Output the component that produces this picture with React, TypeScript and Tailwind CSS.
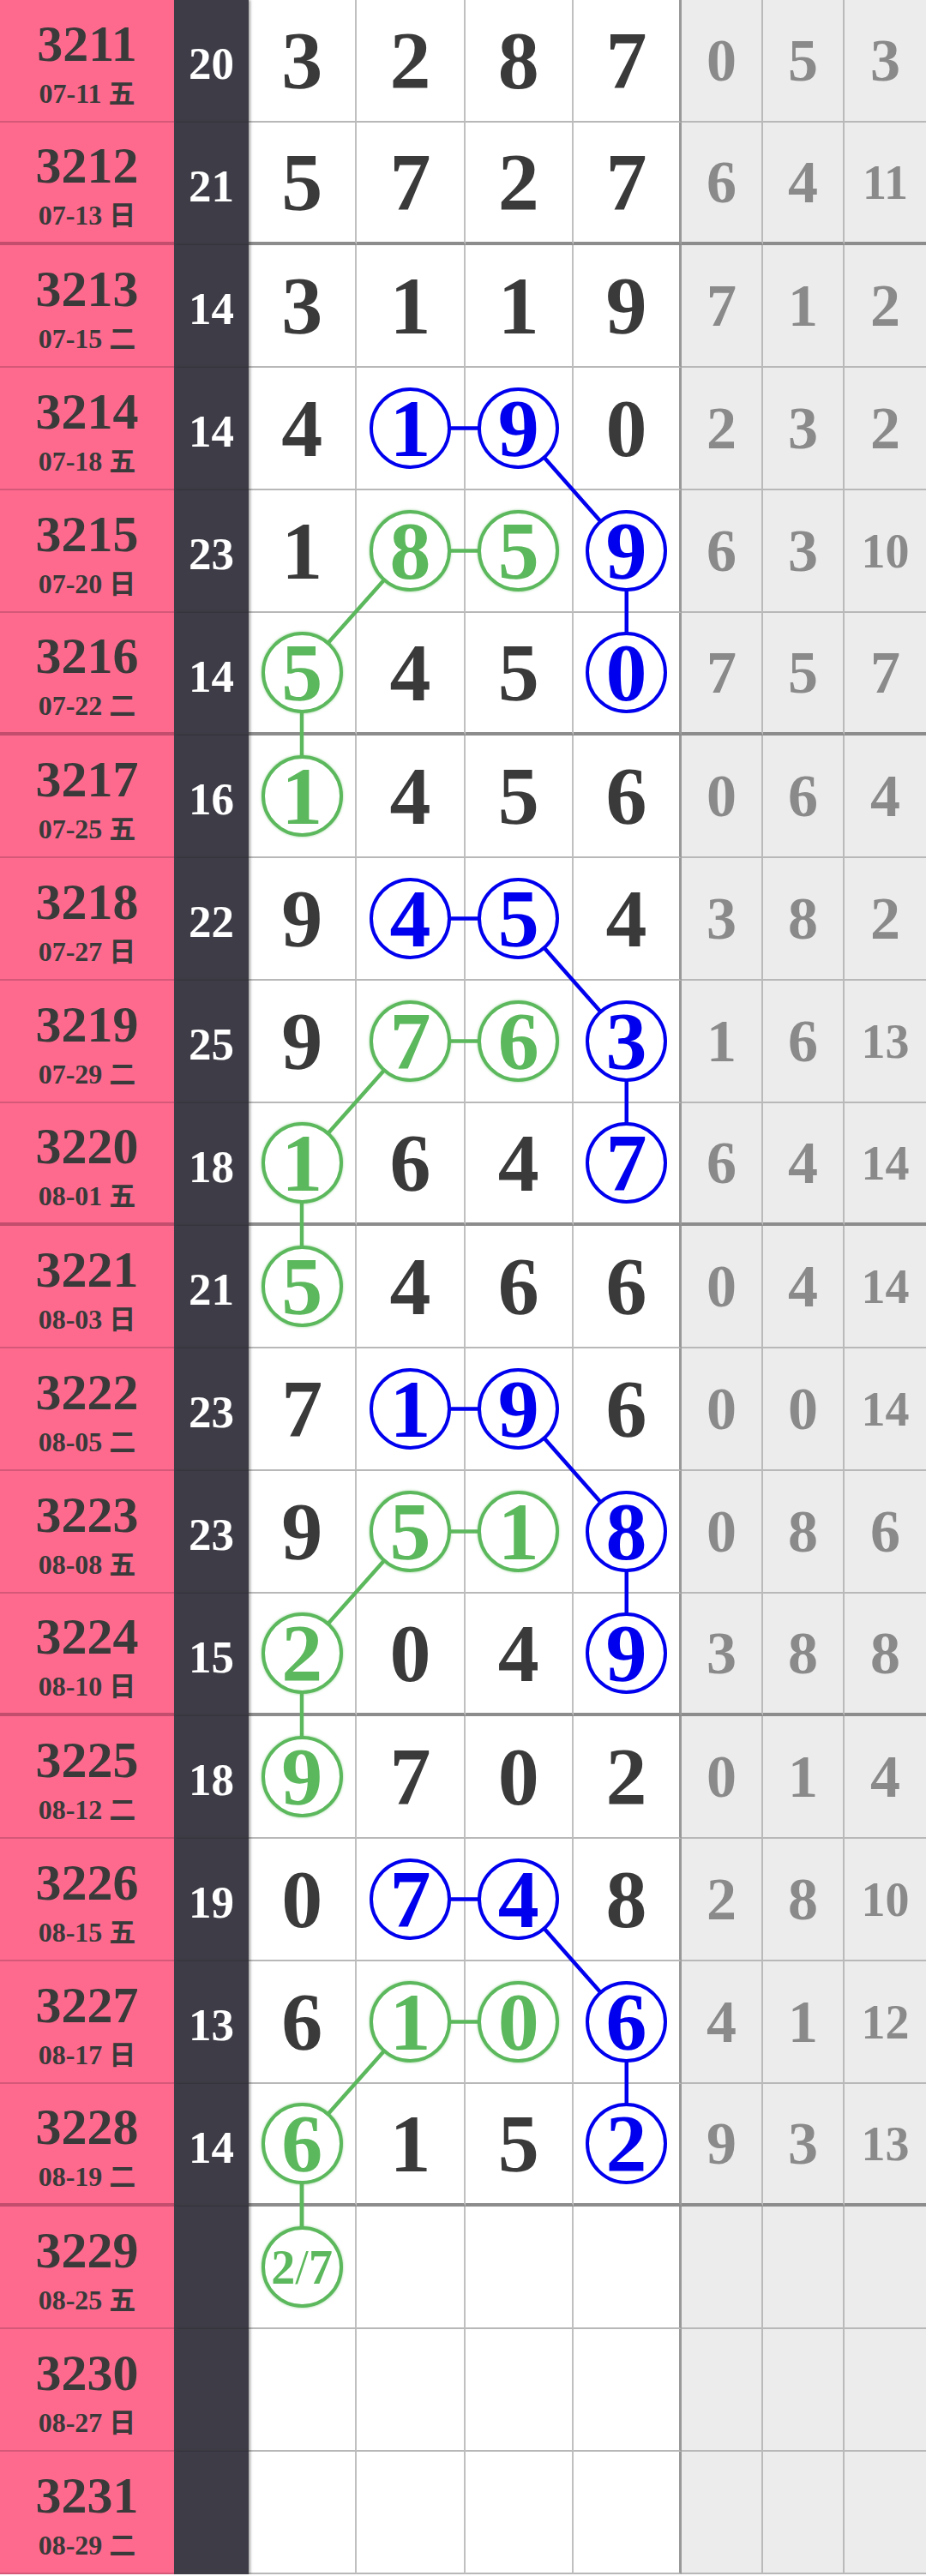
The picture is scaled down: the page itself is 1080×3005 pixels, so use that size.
import React from "react";

type Row = {
  no: string;
  date: string;
  wd: string;
  sum?: number;
  d?: number[];
  g?: number[];
};

const rows: Row[] = [
  { no: "3211", date: "07-11", wd: "五", sum: 20, d: [3, 2, 8, 7], g: [0, 5, 3] },
  { no: "3212", date: "07-13", wd: "日", sum: 21, d: [5, 7, 2, 7], g: [6, 4, 11] },
  { no: "3213", date: "07-15", wd: "二", sum: 14, d: [3, 1, 1, 9], g: [7, 1, 2] },
  { no: "3214", date: "07-18", wd: "五", sum: 14, d: [4, 1, 9, 0], g: [2, 3, 2] },
  { no: "3215", date: "07-20", wd: "日", sum: 23, d: [1, 8, 5, 9], g: [6, 3, 10] },
  { no: "3216", date: "07-22", wd: "二", sum: 14, d: [5, 4, 5, 0], g: [7, 5, 7] },
  { no: "3217", date: "07-25", wd: "五", sum: 16, d: [1, 4, 5, 6], g: [0, 6, 4] },
  { no: "3218", date: "07-27", wd: "日", sum: 22, d: [9, 4, 5, 4], g: [3, 8, 2] },
  { no: "3219", date: "07-29", wd: "二", sum: 25, d: [9, 7, 6, 3], g: [1, 6, 13] },
  { no: "3220", date: "08-01", wd: "五", sum: 18, d: [1, 6, 4, 7], g: [6, 4, 14] },
  { no: "3221", date: "08-03", wd: "日", sum: 21, d: [5, 4, 6, 6], g: [0, 4, 14] },
  { no: "3222", date: "08-05", wd: "二", sum: 23, d: [7, 1, 9, 6], g: [0, 0, 14] },
  { no: "3223", date: "08-08", wd: "五", sum: 23, d: [9, 5, 1, 8], g: [0, 8, 6] },
  { no: "3224", date: "08-10", wd: "日", sum: 15, d: [2, 0, 4, 9], g: [3, 8, 8] },
  { no: "3225", date: "08-12", wd: "二", sum: 18, d: [9, 7, 0, 2], g: [0, 1, 4] },
  { no: "3226", date: "08-15", wd: "五", sum: 19, d: [0, 7, 4, 8], g: [2, 8, 10] },
  { no: "3227", date: "08-17", wd: "日", sum: 13, d: [6, 1, 0, 6], g: [4, 1, 12] },
  { no: "3228", date: "08-19", wd: "二", sum: 14, d: [6, 1, 5, 2], g: [9, 3, 13] },
  { no: "3229", date: "08-25", wd: "五" },
  { no: "3230", date: "08-27", wd: "日" },
  { no: "3231", date: "08-29", wd: "二" },
];

const BLUE = "#0000ee";
const GREEN = "#5cb85c";
const ROW_H = 143;
const LEFT = 290;
const COL_W = 126.25;

// [row, col] pairs joined by a line
type Seg = { a: [number, number]; b: [number, number]; color: string };
const segs: Seg[] = [];
[3, 7, 11, 15].forEach((b) => {
  segs.push({ a: [b, 1], b: [b, 2], color: BLUE });
  segs.push({ a: [b, 2], b: [b + 1, 3], color: BLUE });
  segs.push({ a: [b + 1, 3], b: [b + 2, 3], color: BLUE });
  segs.push({ a: [b + 1, 1], b: [b + 1, 2], color: GREEN });
  segs.push({ a: [b + 1, 1], b: [b + 2, 0], color: GREEN });
  segs.push({ a: [b + 2, 0], b: [b + 3, 0], color: GREEN });
});

const marks: Record<string, string> = {};
segs.forEach((s) => {
  marks[s.a.join("-")] = s.color;
  marks[s.b.join("-")] = s.color;
});

const isGroupEnd = (i: number) => i % 4 === 1;
const cx = (c: number) => LEFT + COL_W * c + 62;
const cy = (r: number) => r * ROW_H + (isGroupEnd(r) ? 139 : 141) / 2;

const serif = "font-['Liberation_Serif','Noto_Sans_CJK_SC',serif] font-bold";

function Circle({ color, children }: { color: string; children: React.ReactNode }) {
  const blue = color === BLUE;
  return (
    <div
      className={`relative z-10 w-[95px] h-[95px] rounded-full bg-white border-4 flex items-center justify-center ${
        blue
          ? "border-[#0000ee] text-[#0000ee]"
          : "border-[#5cb85c] text-[#5cb85c] shadow-[0_0_3px_rgba(92,184,92,0.6)]"
      }`}
    >
      {children}
    </div>
  );
}

export default function App() {
  return (
    <div className={`relative w-[1080px] bg-white ${serif}`}>
      {rows.map((r, i) => {
        const end = isGroupEnd(i);
        const hb = end ? "border-b-4 border-b-[#8c8c8c]" : "border-b-2 border-b-[#b8b8b8]";
        return (
          <div
            key={r.no}
            className="grid grid-cols-[203px_87px_repeat(4,minmax(0,1fr))_repeat(3,95px)] h-[143px]"
          >
            <div
              className={`bg-[#fe6a8e] flex flex-col items-center justify-center text-[#3a3a3a] ${
                end ? "border-b-4 border-b-[#c24d6c]" : "border-b-2 border-b-[#d55879]"
              }`}
            >
              <div className="text-[60px] leading-none pt-[4px]">{r.no}</div>
              <div className="text-[32px] leading-none mt-[10px]">
                {r.date}{" "}
                <span className="font-['Noto_Sans_CJK_SC',sans-serif] text-[31px]">{r.wd}</span>
              </div>
            </div>
            <div className="bg-[#3e3d47] text-white text-[53px] leading-none flex items-center justify-center pt-[6px] shadow-[2px_0_3px_rgba(0,0,0,0.35)] relative z-[1]">
              {r.sum ?? ""}
            </div>
            {[0, 1, 2, 3].map((c) => {
              const color = marks[`${i}-${c}`];
              const last = c === 3;
              return (
                <div
                  key={c}
                  className={`bg-white flex items-center justify-center text-[96px] leading-none text-[#3a3a3a] ${hb} ${
                    last ? "border-r-[3px] border-r-[#999999]" : "border-r-2 border-r-[#c0c0c0]"
                  }`}
                >
                  {i === 18 && c === 0 ? (
                    <Circle color={GREEN}>
                      <span className="text-[56px] leading-none">
                        2<span className="font-normal">/</span>7
                      </span>
                    </Circle>
                  ) : r.d ? (
                    color ? (
                      <Circle color={color}>
                        <span className="leading-none">{r.d[c]}</span>
                      </Circle>
                    ) : (
                      r.d[c]
                    )
                  ) : null}
                </div>
              );
            })}
            {[0, 1, 2].map((c) => {
              const v = r.g ? r.g[c] : undefined;
              return (
                <div
                  key={c}
                  className={`bg-[#ececec] flex items-center justify-center leading-none text-[#8a8a8a] ${hb} ${
                    c < 2 ? "border-r-2 border-r-[#bababa]" : ""
                  } ${v !== undefined && v > 9 ? "text-[56px]" : "text-[70px]"}`}
                >
                  {v ?? ""}
                </div>
              );
            })}
          </div>
        );
      })}

      {/* connecting lines */}
      <svg className="absolute left-0 top-0 z-[5] pointer-events-none" width={1080} height={3005}>
        {segs.map((s, k) => (
          <line
            key={k}
            x1={cx(s.a[1])}
            y1={cy(s.a[0])}
            x2={cx(s.b[1])}
            y2={cy(s.b[0])}
            stroke={s.color}
            strokeWidth={4.5}
          />
        ))}
        <line x1={cx(0)} y1={cy(17)} x2={cx(0)} y2={cy(18)} stroke={GREEN} strokeWidth={4.5} />
      </svg>
    </div>
  );
}
